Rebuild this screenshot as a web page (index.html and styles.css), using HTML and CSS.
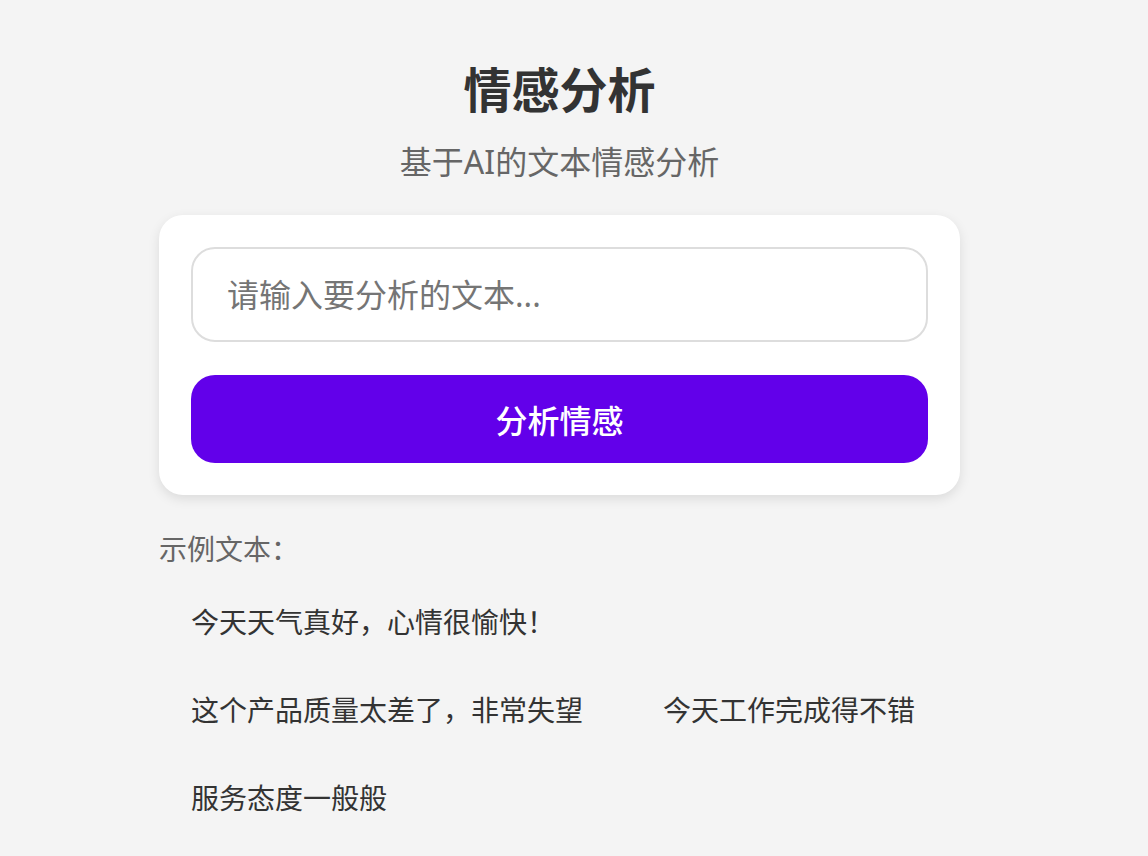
FILE: index.html
```html
<!DOCTYPE html>
<html lang="zh-CN">

<head>
    <meta charset="UTF-8">
    <meta name="viewport" content="width=device-width, initial-scale=1.0">
    <link rel="stylesheet" href="styles.css">
    <title>情感分析</title>
</head>

<body>
    <div class="app">
        <h1 class="title">情感分析</h1>
        <p class="subtitle">基于AI的文本情感分析</p>

        <div class="card">
            <input class="text-input" type="text" placeholder="请输入要分析的文本...">
            <button class="analyze-btn">分析情感</button>
        </div>

        <div class="examples">
            <p class="examples-label">示例文本：</p>
            <ul class="example-list">
                <li>今天天气真好，心情很愉快！</li>
                <li>这个产品质量太差了，非常失望</li>
                <li>今天工作完成得不错</li>
                <li>服务态度一般般</li>
            </ul>
        </div>
    </div>
</body>

</html>
```

FILE: styles.css
```css
* {
    margin: 0;
    padding: 0;
    box-sizing: border-box;
}

body {
    background-color: #f4f4f4;
    font-family: "Noto Sans", "Noto Sans CJK SC", sans-serif;
    color: #333;
    padding: 58px 29px 0 0;
}

.app {
    width: 801px;
    margin: 0 auto;
}

.title {
    font-size: 48px;
    line-height: 64px;
    font-weight: 700;
    text-align: center;
    color: #333;
}

.subtitle {
    margin-top: 18px;
    font-size: 32px;
    line-height: 44px;
    text-align: center;
    color: #666;
}

.card {
    margin-top: 31px;
    background-color: #fff;
    border-radius: 24px;
    padding: 32px;
    box-shadow: 0 4px 12px rgba(0, 0, 0, 0.1);
    display: flex;
    flex-direction: column;
    gap: 33px;
}

.text-input {
    height: 95px;
    border: 2px solid #ddd;
    border-radius: 24px;
    padding: 0 34px;
    font-size: 32px;
    font-family: inherit;
    color: #333;
    outline: none;
}

.text-input::placeholder {
    color: #757575;
}

.analyze-btn {
    height: 88px;
    border: none;
    border-radius: 24px;
    background-color: #6200ea;
    color: #fff;
    font-size: 32px;
    font-weight: 500;
    font-family: inherit;
    cursor: pointer;
}

.examples {
    margin-top: 34px;
}

.examples-label {
    font-size: 28px;
    line-height: 40px;
    color: #666;
}

.example-list {
    list-style: none;
    margin-top: 17px;
    display: flex;
    flex-wrap: wrap;
    gap: 16px;
}

.example-list li {
    font-size: 28px;
    line-height: 40px;
    padding: 16px 32px;
    border-radius: 16px;
    cursor: pointer;
}
```
